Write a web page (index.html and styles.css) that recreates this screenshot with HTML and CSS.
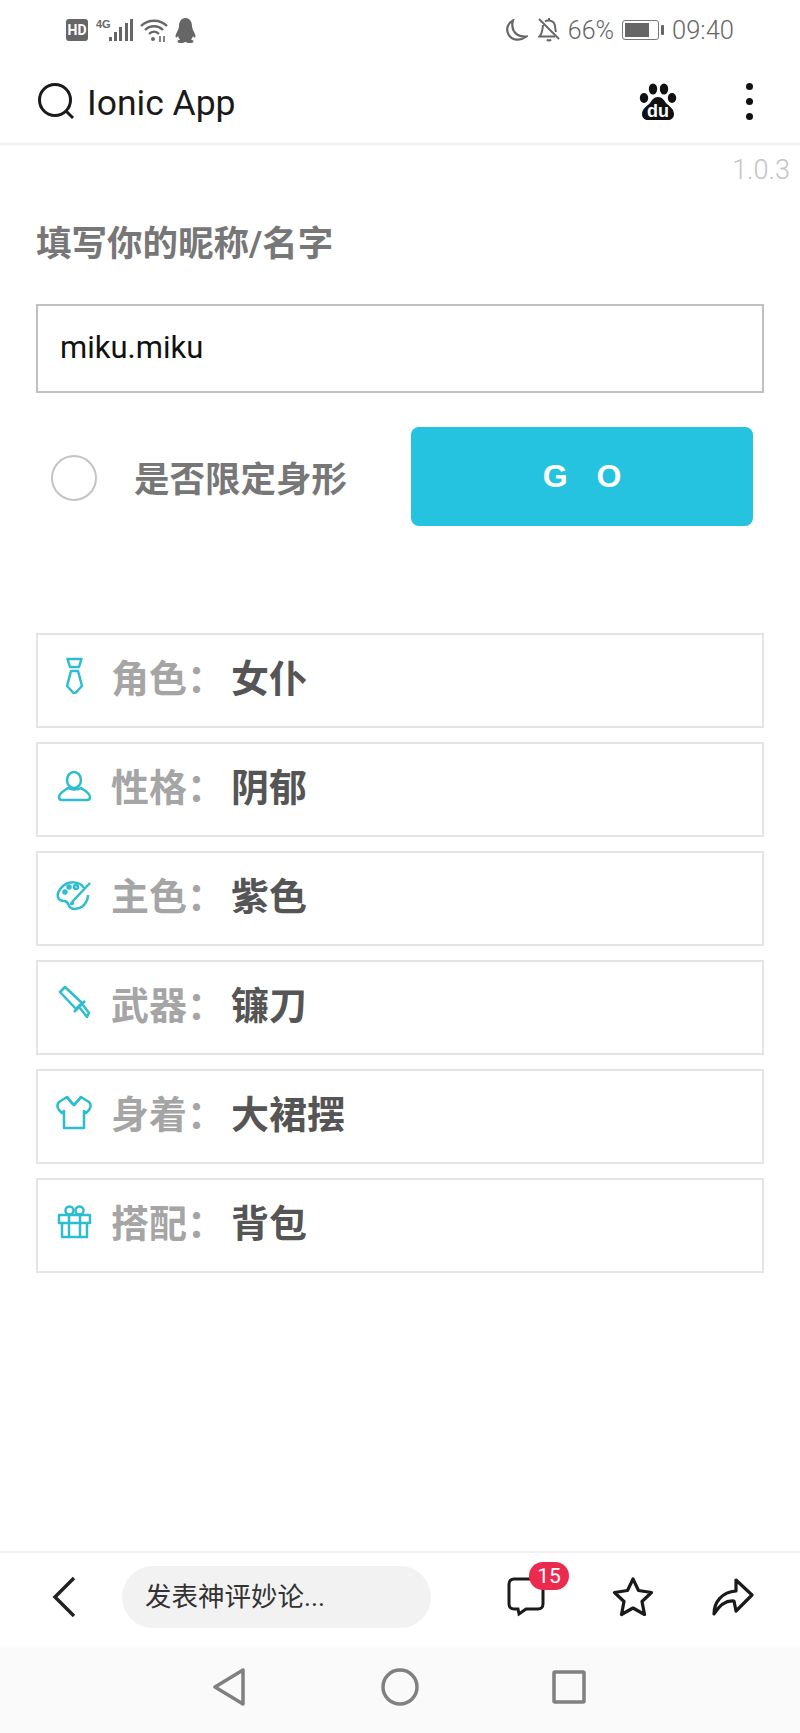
FILE: index.html
```html
<!DOCTYPE html>
<html>
<head>
	<meta charset="utf-8">
	<title>Ionic App</title>
	<link rel="stylesheet" href="styles.css">
</head>
<body>
<div class="phone">
	<div class="status">
		<div class="status-side">
			<span class="hd">HD</span>
			<svg class="ico-signal" width="38" height="24" viewBox="0 0 38 24">
				<text x="0" y="10" class="net">4G</text>
				<g fill="#666"><rect x="13" y="19" width="3" height="4"/><rect x="18" y="14" width="3" height="9"/><rect x="23" y="9" width="3" height="14"/><rect x="29" y="5" width="3" height="18"/><rect x="34" y="1" width="3" height="22"/></g>
			</svg>
			<svg class="ico-wifi" width="28" height="24" viewBox="0 0 28 24" fill="none" stroke="#666" stroke-width="2.4">
				<path d="M1 8C8 1 20 1 27 8"/><path d="M5 12C10 7 18 7 23 12"/><path d="M9 16C12 13 16 13 19 16"/>
				<circle cx="13" cy="21" r="2" fill="#666" stroke="none"/><path d="M20 18v6M24 18v6" stroke-width="1.6"/>
			</svg>
			<svg class="ico-qq" width="21" height="25" viewBox="0 0 21 25" fill="#666">
				<path d="M10.5 0C6 0 4 4 4 8c0 2-1 4-2 6-1.500 3-2 5-1 5.500.8.300 1.600-.7 2-1.500.3 1.500 1 2.500 2 3.500-1.500.5-2.500 1-2.500 2 0 1 2 1.500 4 1.500 1.500 0 3-.5 4-1 1 .5 2.500 1 4 1 2 0 4-.5 4-1.500 0-1-1-1.500-2.500-2 1-1 1.700-2 2-3.500.4.8 1.200 1.800 2 1.500 1-.5.5-2.500-1-5.500-1-2-2-4-2-6 0-4-2-8-6.500-8z"/>
			</svg>
		</div>
		<div class="status-side">
			<svg class="ico-moon" width="23" height="23" viewBox="0 0 23 23" fill="none" stroke="#666" stroke-width="2.200">
				<path d="M8 1.500C3 4 0.500 10 3.500 15.500 7 21.500 15 22.500 21.500 17.500 15 18 10.500 15.500 8.500 11.500 7 8 7 4.500 8 1.500z"/>
			</svg>
			<svg class="ico-bell" width="22" height="24" viewBox="0 0 22 24" fill="none" stroke="#666" stroke-width="2">
				<path d="M1 1l20 20"/><path d="M5 7c-.5 6-1 9-3.500 11.500H17"/><path d="M7 3.500C9 2 14 2 16 5c1.500 2.500 1 6 2 9"/><path d="M9 21.500c1 1.200 3 1.200 4 0"/><path d="M11 2V0"/>
			</svg>
			<span class="pct">66%</span>
			<svg class="ico-batt" width="43" height="20" viewBox="0 0 43 20">
				<rect x="0.500" y="0.500" width="36" height="19" rx="2.500" fill="none" stroke="#777"/>
				<rect x="3" y="3" width="24" height="14" fill="#666"/>
				<rect x="39" y="5" width="3" height="10" rx="1" fill="#666"/>
			</svg>
			<span class="clock">09:40</span>
		</div>
	</div>

	<div class="header">
		<svg class="ico-search" width="38" height="38" viewBox="0 0 38 38" fill="none" stroke="#1a1a1a" stroke-width="3">
			<circle cx="18" cy="17" r="15.500"/><path d="M29 28l7 7"/>
		</svg>
		<span class="app-title">Ionic App</span>
		<svg class="ico-paw" width="38" height="38" viewBox="0 0 38 38" fill="#111">
			<ellipse cx="14" cy="6" rx="4.200" ry="5.500"/><ellipse cx="25" cy="6" rx="4.200" ry="5.500"/>
			<ellipse cx="5" cy="15" rx="4.200" ry="5"/><ellipse cx="33" cy="15" rx="4.200" ry="5"/>
			<path d="M19 14c-4 0-6 3-8 6-3 3-8 6-8 11 0 4 3 6 6 6h20c3 0 6-2 6-6 0-5-5-8-8-11-2-3-4-6-8-6z"/>
			<text x="19" y="34" class="du">du</text>
		</svg>
		<span class="more"><i></i><i></i><i></i></span>
	</div>

	<div class="content">
		<div class="version">1.0.3</div>
		<div class="name-label">填写你的昵称/名字</div>
		<div class="name-input">miku.miku</div>
		<div class="options">
			<span class="radio"></span>
			<span class="radio-label">是否限定身形</span>
			<div class="go">G&nbsp;O</div>
		</div>

		<div class="rows">
			<div class="row">
				<span class="row-ico">
					<svg width="36" height="38" viewBox="0 0 36 38" class="teal"><path d="M11.500 3h14L23 11h-9zM15 15h7l4 15-7.500 8-7.500-8z"/></svg>
				</span>
				<span class="row-key">角色：</span><span class="row-val">女仆</span>
			</div>
			<div class="row">
				<span class="row-ico">
					<svg width="36" height="38" viewBox="0 0 36 38" class="teal"><ellipse cx="18" cy="15" rx="7" ry="8"/><path d="M12 23C8 26 3 28 3 32c0 2 1 3 3 3h25c2 0 3-1 3-3 0-4-5-6-9-9-3 2-10 2-13 0z"/></svg>
				</span>
				<span class="row-key">性格：</span><span class="row-val">阴郁</span>
			</div>
			<div class="row">
				<span class="row-ico">
					<svg width="36" height="38" viewBox="0 0 36 38" class="teal"><path d="M28 14C24 7 12 6 5 14c-6 7-3 13 3 13 4 0 4 3 5 5 2 4 9 4 14 0 3-3 5-6 5-11"/><path d="M16 28l18-19M16 28l-1 2 3-1"/><circle cx="9" cy="18" r="1.500"/><circle cx="13" cy="13" r="1.500"/><circle cx="20" cy="13" r="2"/></svg>
				</span>
				<span class="row-key">主色：</span><span class="row-val">紫色</span>
			</div>
			<div class="row">
				<span class="row-ico">
					<svg width="36" height="38" viewBox="0 0 36 38" class="teal"><path d="M4 9l5-5 17 16-6 6zM18 29l11-11M24 25l7 9 2-4-6-8"/></svg>
				</span>
				<span class="row-key">武器：</span><span class="row-val">镰刀</span>
			</div>
			<div class="row">
				<span class="row-ico">
					<svg width="36" height="38" viewBox="0 0 36 38" class="teal"><path d="M11 5L3 10c-2 2-2 5 0 8l3 3 2-2v17h20V19l2 2 3-3c2-3 2-6 0-8l-8-5-7 8z"/><path d="M11 5c2 3 4 6 7 8 2-2 5-5 7-8"/></svg>
				</span>
				<span class="row-key">身着：</span><span class="row-val">大裙摆</span>
			</div>
			<div class="row">
				<span class="row-ico">
					<svg width="36" height="38" viewBox="0 0 36 38" class="teal"><path d="M3 14h31v8H3zM6 22h25v14H6zM13 14v22M24 14v22"/><circle cx="13.500" cy="9.500" r="4"/><circle cx="23.500" cy="9.500" r="4"/></svg>
				</span>
				<span class="row-key">搭配：</span><span class="row-val">背包</span>
			</div>
		</div>
	</div>

	<div class="toolbar">
		<svg class="ico-back" width="24" height="42" viewBox="0 0 24 42" fill="none" stroke="#222" stroke-width="3.500">
			<path d="M22 2L3 21l19 19"/>
		</svg>
		<div class="comment-box">发表神评妙论...</div>
		<span class="comment-btn">
			<svg width="38" height="40" viewBox="0 0 38 40" fill="none" stroke="#1a1a1a" stroke-width="3">
				<path d="M7 2h24c3 0 5 2 5 5v20c0 3-2 5-5 5H19l-7 5-1-5H7c-3 0-5-2-5-5V7c0-3 2-5 5-5z"/>
			</svg>
			<span class="badge">15</span>
		</span>
		<svg class="ico-star" width="42" height="40" viewBox="0 0 42 40" fill="none" stroke="#1a1a1a" stroke-width="3.200" stroke-linejoin="round">
			<path d="M21 2l5.500 11.500 13 2-9.500 9 2.500 13L21 31l-11.500 6.500 2.500-13-9.500-9 13-2z"/>
		</svg>
		<svg class="ico-share" width="42" height="38" viewBox="0 0 42 38" fill="none" stroke="#1a1a1a" stroke-width="3.200" stroke-linejoin="round">
			<path d="M2 36C2 24 10 14 24 13V2l16 15-16 16-2-10C13 22 7 28 2 36z"/>
		</svg>
	</div>

	<div class="navbar">
		<svg width="34" height="38" viewBox="0 0 34 38" fill="none" stroke="#808080" stroke-width="3.500" stroke-linejoin="round">
			<path d="M31 2v34L3 19z"/>
		</svg>
		<svg width="38" height="38" viewBox="0 0 38 38" fill="none" stroke="#808080" stroke-width="3.500">
			<circle cx="19" cy="19" r="17"/>
		</svg>
		<svg class="ico-square" width="34" height="34" viewBox="0 0 34 34" fill="none" stroke="#808080" stroke-width="3.500" stroke-linejoin="round">
			<rect x="2" y="2" width="30" height="30" rx="1"/>
		</svg>
	</div>
</div>
</body>
</html>
```

FILE: styles.css
```css
* {
	margin: 0;
	padding: 0;
	box-sizing: border-box;
}
body {
	background: #fff;
	font-family: Roboto, "Noto Sans CJK SC", sans-serif;
}
svg {
	display: block;
	flex: none;
}
.phone {
	width: 800px;
	height: 1733px;
	display: flex;
	flex-direction: column;
	overflow: hidden;
}

/* status bar */
.status {
	height: 60px;
	padding: 0 66px;
	display: flex;
	justify-content: space-between;
	align-items: center;
	color: #666;
}
.status-side {
	display: flex;
	align-items: center;
}
.hd {
	width: 22px;
	height: 22px;
	line-height: 22px;
	border-radius: 3px;
	background: #666;
	color: #fff;
	font-size: 14px;
	font-weight: 700;
	text-align: center;
}
.net {
	font-family: "Liberation Sans", sans-serif;
	font-size: 11px;
	font-weight: 700;
	fill: #666;
}
.ico-signal {
	margin-left: 8px;
}
.ico-wifi {
	margin-left: 6px;
}
.ico-qq {
	margin-left: 7px;
}
.ico-bell {
	margin-left: 10px;
}
.pct {
	margin-left: 8px;
	font-size: 25px;
	font-weight: 300;
}
.ico-batt {
	margin-left: 8px;
}
.clock {
	margin-left: 7px;
	font-size: 25.500px;
	font-weight: 300;
}

/* header */
.header {
	height: 85px;
	padding-left: 37px;
	display: flex;
	align-items: center;
	border-bottom: 2px solid #eee;
}
.app-title {
	margin: 2px 0 0 12px;
	font-size: 35.500px;
	color: #1a1a1a;
}
.ico-paw {
	margin-left: auto;
}
.du {
	font-family: "Liberation Sans", sans-serif;
	font-size: 18px;
	font-weight: 700;
	fill: #fff;
	text-anchor: middle;
}
.more {
	width: 7px;
	margin: 0 47px 0 69px;
	display: flex;
	flex-direction: column;
	gap: 8px;
}
.more i {
	display: block;
	height: 7px;
	border-radius: 50%;
	background: #111;
}

/* form */
.content {
	flex: 1;
	padding: 0 36px;
}
.version {
	margin: 8px -26px 0 0;
	text-align: right;
	font-size: 27px;
	font-weight: 300;
	line-height: 34px;
	color: #c4c4c4;
}
.name-label {
	margin-top: 32px;
	font-size: 35.500px;
	font-weight: 700;
	line-height: 50px;
	color: #777;
}
.name-input {
	height: 89px;
	margin-top: 35px;
	padding-left: 22px;
	border: 2px solid #c0c0c0;
	font-size: 31px;
	line-height: 84px;
	color: #111;
}
.options {
	margin-top: 34px;
	display: flex;
	align-items: center;
}
.radio {
	width: 46px;
	height: 46px;
	margin: 2px 0 0 15px;
	border: 2px solid #c4c4c4;
	border-radius: 50%;
}
.radio-label {
	margin-left: 37px;
	font-size: 35.500px;
	font-weight: 700;
	color: #777;
}
.go {
	width: 342px;
	height: 99px;
	margin: 0 11px 0 auto;
	border-radius: 8px;
	background: #26c3e0;
	color: #fff;
	font-family: "Liberation Sans", sans-serif;
	font-size: 32px;
	font-weight: 700;
	line-height: 99px;
	text-align: center;
	word-spacing: 0;
	letter-spacing: 10px;
	text-indent: 10px;
}

/* result rows */
.rows {
	margin-top: 107px;
	display: flex;
	flex-direction: column;
	gap: 14px;
}
.row {
	height: 95px;
	padding: 0 0 11px 18px;
	display: flex;
	align-items: center;
	border: 2px solid #e4e4e4;
	font-size: 38px;
	font-weight: 700;
}
.row-ico {
	width: 36px;
	flex: none;
}
.teal {
	fill: none;
	stroke: #2dbdcf;
	stroke-width: 2.500;
	stroke-linejoin: round;
}
.row-key {
	width: 120px;
	margin-left: 19px;
	color: #a5a5a5;
	white-space: nowrap;
}
.row-val {
	color: #555;
}

/* bottom bars */
.toolbar {
	height: 96px;
	padding: 0 0 6px 52px;
	display: flex;
	align-items: center;
	border-top: 2px solid #f2f2f2;
}
.comment-box {
	width: 309px;
	height: 62px;
	margin-left: 46px;
	padding: 3px 0 0 23px;
	border-radius: 31px;
	background: #f2f2f2;
	font-size: 26.500px;
	line-height: 56px;
	color: #333;
}
.comment-btn {
	position: relative;
	margin-left: 76px;
}
.badge {
	position: absolute;
	left: 22px;
	top: -15px;
	width: 40px;
	height: 28px;
	border-radius: 14px;
	background: #ec2a4f;
	color: #fff;
	font-size: 21px;
	line-height: 28px;
	text-align: center;
}
.ico-star {
	margin-left: 67px;
}
.ico-share {
	margin-left: 58px;
}
.navbar {
	height: 86px;
	padding: 0 0 6px 212px;
	display: flex;
	align-items: center;
	gap: 0 135px;
	background: #fafafa;
}
.ico-square {
	margin-left: -2px;
}
```
